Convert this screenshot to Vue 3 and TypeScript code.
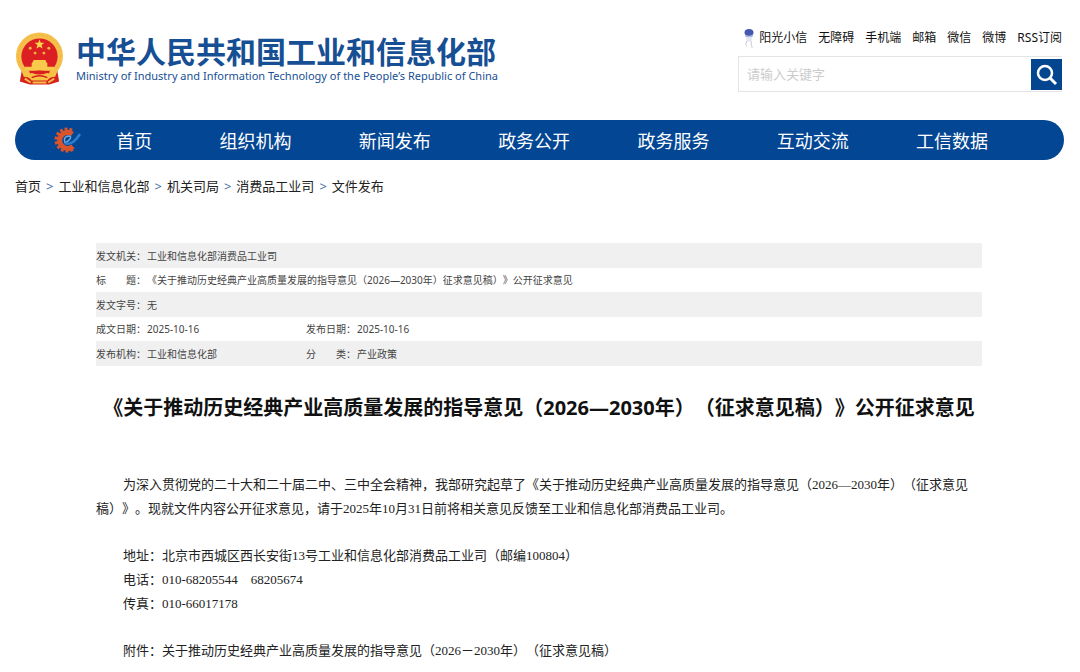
<script setup lang="ts">
import { ref } from 'vue'

const keyword = ref('')

const quickLinks: string[] = ['无障碍', '手机端', '邮箱', '微信', '微博', 'RSS订阅']
const navItems: string[] = ['首页', '组织机构', '新闻发布', '政务公开', '政务服务', '互动交流', '工信数据']
const crumbs: string[] = ['首页', '工业和信息化部', '机关司局', '消费品工业司', '文件发布']

// Teeth around the open gear of the portal mark
const gearTeeth: number[] = [40, 65, 90, 115, 140, 165, 190, 215, 240, 265]
</script>

<template>
  <div class="page">
    <header class="header">
      <a class="brand" href="#">
        <svg class="emblem" viewBox="0 0 50 54" aria-hidden="true">
          <path d="M7 38 L5 50 L15 53 L35 53 L45 50 L43 38 Z" fill="#d8201f" />
          <circle cx="25" cy="24" r="24" fill="#f5c04c" />
          <circle cx="25" cy="24" r="21.5" fill="none" stroke="#eeb040" stroke-width="1" stroke-dasharray="2 2" />
          <circle cx="25" cy="24.5" r="18.5" fill="#dc1f22" />
          <path d="M25 7l1.3 3.4 3.7.1-2.900 2.300 1 3.600-3.100-2-3.100 2 1-3.600-2.900-2.300 3.700-.1z" fill="#fbd84b" />
          <g fill="#f5b840">
            <circle cx="15.5" cy="16" r="1.5" />
            <circle cx="34.5" cy="16" r="1.5" />
            <circle cx="20.5" cy="21" r="1.5" />
            <circle cx="29.5" cy="21" r="1.5" />
          </g>
          <path d="M19 28h12l1.5 3h-15zM17 31h16v4H17zM10 35h30v4H10z" fill="#f8c94a" />
          <path d="M7 40q9 0 12 3h12q3-3 12-3l-2 5q-6 0-8 4H17q-2-4-8-4z" fill="#f5c244" />
          <path d="M15 41q10-3 20 0M17 46q8-4 16 0" fill="none" stroke="#d8201f" stroke-width="1.5" />
          <path d="M10 47l6 4M40 47l-6 4M18 51h14" stroke="#f3bd45" stroke-width="2" />
        </svg>
        <span class="brand-text">
          <span class="brand-name">中华人民共和国工业和信息化部</span>
          <span class="brand-en" lang="en">Ministry of Industry and Information Technology of the People’s Republic of China</span>
        </span>
      </a>

      <div class="tools">
        <div class="quick">
          <a class="mascot-link" href="#">
            <svg class="mascot" viewBox="0 0 12 20" aria-hidden="true">
              <path d="M3 8.5h6l-.5 5h-5z" fill="#e4e6f4" />
              <path d="M4 13l-1.5 4M8 13l.5 5M3 18h1M8 19h2" stroke="#c9cbdc" stroke-width="1" fill="none" />
              <ellipse cx="6" cy="4.5" rx="4.5" ry="3.5" fill="#4657b0" />
              <path d="M2 6.5q4 2.500 8 0l-.5 2.500h-7z" fill="#a9b3de" />
            </svg>
            阳光小信
          </a>
          <a v-for="link in quickLinks" :key="link" href="#">{{ link }}</a>
        </div>
        <form class="search" @submit.prevent>
          <input v-model="keyword" type="text" placeholder="请输入关键字" aria-label="请输入关键字" />
          <button type="submit" aria-label="搜索">
            <svg viewBox="0 0 31 31" aria-hidden="true">
              <circle cx="14" cy="14" r="7" fill="none" stroke="#fff" stroke-width="2.5" />
              <path d="M19 19l6 6" stroke="#fff" stroke-width="3" />
            </svg>
          </button>
        </form>
      </div>
    </header>

    <nav class="nav">
      <svg class="gear" viewBox="0 0 28 28" aria-hidden="true">
        <g fill="#d9532c">
          <rect v-for="angle in gearTeeth" :key="angle" x="11.5" y="1.5" width="3" height="5" :transform="`rotate(${60 - angle} 13 14)`" />
        </g>
        <path d="M18.500 8A8 8 0 1 0 19 20.500" fill="none" stroke="#d9532c" stroke-width="5" />
        <path d="M11 17Q9 11 14 10Q18 10 16 13Q14.500 15 11 17" fill="none" stroke="#6fa6dc" stroke-width="1.5" />
        <path d="M11 17Q14 19 19 16Q23 13 26 8" fill="none" stroke="#2b7fd0" stroke-width="2.5" />
      </svg>
      <a v-for="item in navItems" :key="item" href="#">{{ item }}</a>
    </nav>

    <div class="crumbs">
      <template v-for="(crumb, i) in crumbs" :key="crumb">
        <span v-if="i > 0" class="sep">&gt;</span>
        <a href="#">{{ crumb }}</a>
      </template>
    </div>

    <main class="content">
      <table class="meta">
        <colgroup>
          <col class="col-label" />
          <col class="col-value" />
          <col class="col-label" />
          <col />
        </colgroup>
        <tbody>
          <tr>
            <th scope="row">发文机关：</th>
            <td colspan="3">工业和信息化部消费品工业司</td>
          </tr>
          <tr>
            <th scope="row">标　　题：</th>
            <td colspan="3">《关于推动历史经典产业高质量发展的指导意见（2026—2030年）征求意见稿）》公开征求意见</td>
          </tr>
          <tr>
            <th scope="row">发文字号：</th>
            <td colspan="3">无</td>
          </tr>
          <tr>
            <th scope="row">成文日期：</th>
            <td>2025-10-16</td>
            <th scope="row">发布日期：</th>
            <td>2025-10-16</td>
          </tr>
          <tr>
            <th scope="row">发布机构：</th>
            <td>工业和信息化部</td>
            <th scope="row">分　　类：</th>
            <td>产业政策</td>
          </tr>
        </tbody>
      </table>

      <h1 class="title">《关于推动历史经典产业高质量发展的指导意见（2026—2030年）（征求意见稿）》公开征求意见</h1>

      <article class="article">
        <p>为深入贯彻党的二十大和二十届二中、三中全会精神，我部研究起草了《关于推动历史经典产业高质量发展的指导意见（2026—2030年）（征求意见稿）》。现就文件内容公开征求意见，请于2025年10月31日前将相关意见反馈至工业和信息化部消费品工业司。</p>
        <div class="contact">
          <p>地址：北京市西城区西长安街13号工业和信息化部消费品工业司（邮编100804）</p>
          <p>电话：010-68205544　68205674</p>
          <p>传真：010-66017178</p>
        </div>
        <p>附件：关于推动历史经典产业高质量发展的指导意见（2026－2030年）（征求意见稿）</p>
      </article>
    </main>
  </div>
</template>

<style>
body {
  margin: 0;
  background: #fff;
}
</style>

<style scoped>
.page {
  padding: 24px 16px 8px 15px;
  font-family: "Noto Sans", "Noto Sans CJK SC", sans-serif;
  color: #222;
  text-spacing-trim: space-all;
}

a {
  color: inherit;
  text-decoration: none;
}

.header {
  display: flex;
  justify-content: space-between;
  align-items: flex-start;
}

.brand {
  display: flex;
  gap: 12px;
  padding-top: 8px;
  color: #174f94;
}

.emblem {
  width: 49px;
  height: 54px;
}

.brand-text {
  display: flex;
  flex-direction: column;
  white-space: nowrap;
}

.brand-name {
  font-family: "Noto Sans CJK SC", sans-serif;
  font-size: 30px;
  font-weight: 700;
  line-height: 36px;
}

.brand-en {
  font-size: 11px;
  line-height: 16px;
}

.tools {
  width: 324px;
  margin-right: 2px;
}

.quick {
  display: flex;
  justify-content: flex-end;
  gap: 11px;
  font-size: 12px;
  line-height: 28px;
  color: #111;
  white-space: nowrap;
}

.mascot-link {
  display: flex;
  align-items: center;
  gap: 4px;
}

.mascot {
  width: 12px;
  height: 20px;
}

.search {
  display: flex;
  align-items: center;
  box-sizing: border-box;
  height: 36px;
  margin-top: 4px;
  border: 1px solid #e4e4e4;
  border-right: 0;
}

.search input {
  flex: 1;
  min-width: 0;
  padding: 0 8px;
  border: 0;
  outline: 0;
  background: transparent;
  font-family: inherit;
  font-size: 13px;
}

.search input::placeholder {
  color: #ccc;
}

.search button {
  width: 31px;
  height: 31px;
  padding: 0;
  border: 0;
  background: #03458f;
}

.search svg {
  display: block;
}

.nav {
  display: flex;
  justify-content: space-between;
  align-items: center;
  height: 40px;
  margin-top: 28px;
  padding: 0 76px 0 39px;
  border-radius: 20px;
  background: #034693;
  color: #fff;
  font-size: 18px;
}

.gear {
  width: 28px;
  height: 28px;
  margin-right: -33px;
}

.crumbs {
  display: flex;
  gap: 5px;
  margin-top: 14px;
  font-size: 13px;
  line-height: 24px;
}

.sep {
  color: #3a6ea5;
}

.content {
  margin: 45px 82px 0 81px;
}

.meta {
  width: 100%;
  table-layout: fixed;
  border-collapse: collapse;
  font-size: 10px;
  line-height: 14px;
  color: #444;
}

.meta tr {
  height: 24px;
}

.meta tr:nth-child(odd) {
  height: 25px;
  background: #f0f0f0;
}

.meta th,
.meta td {
  padding: 0;
  font-weight: 400;
  text-align: left;
  white-space: nowrap;
}

.col-label {
  width: 51px;
}

.col-value {
  width: 159px;
}

.title {
  display: flex;
  justify-content: center;
  margin: 26px 0 0;
  font-size: 20px;
  font-weight: 700;
  line-height: 32px;
  color: #111;
  white-space: nowrap;
}

.article {
  display: flex;
  flex-direction: column;
  gap: 23px;
  margin-top: 49px;
  font-family: "Liberation Serif", "Noto Sans CJK SC", sans-serif;
  font-size: 13px;
  line-height: 24px;
}

.article p {
  margin: 0;
  text-indent: 27px;
}
</style>
